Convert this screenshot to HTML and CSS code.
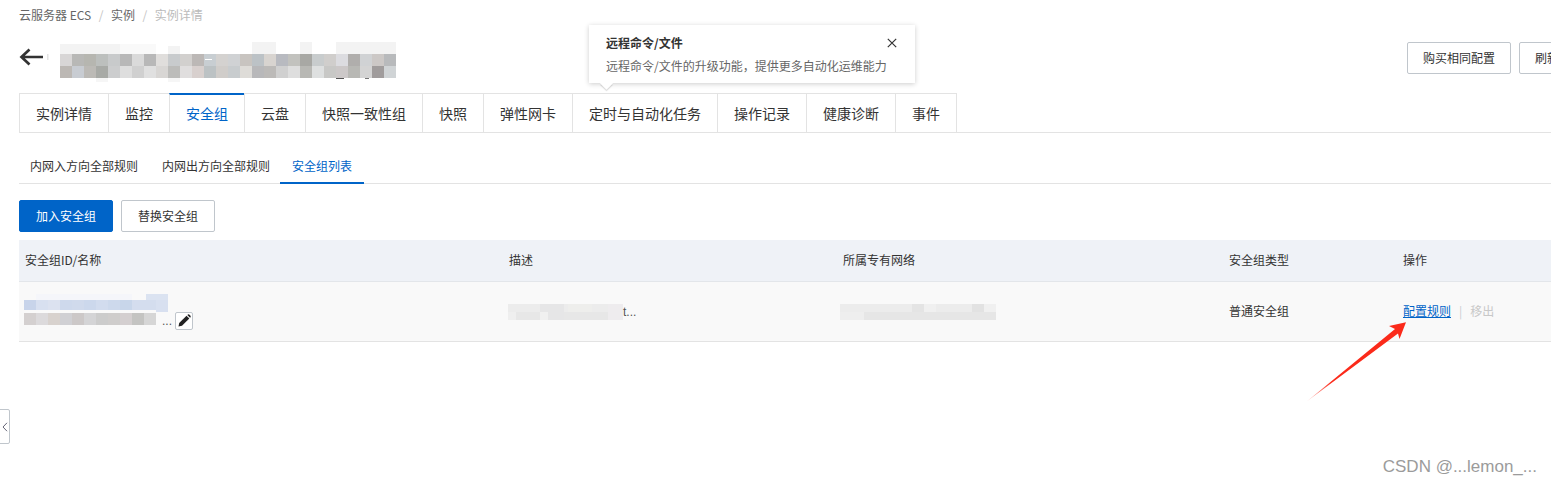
FILE: index.html
```html
<!DOCTYPE html>
<html lang="zh-CN">
<head>
<meta charset="utf-8">
<title>实例详情</title>
<link rel="stylesheet" href="styles.css">
</head>
<body>
<div class="page">
  <nav class="crumbs">
    <a>云服务器 ECS</a><i>/</i><a>实例</a><i>/</i><span>实例详情</span>
  </nav>
  <header class="head">
    <svg class="back" width="30" height="18" viewBox="0 0 30 18"><path d="M24 9H3.500M10.500 1.500 2.500 9l8 7.500" fill="none" stroke="#333" stroke-width="2.700"/><rect x="28" y="6" width="1.500" height="6" fill="#e4e4e4"/></svg>
    <svg class="mosaic-title" width="336" height="41" viewBox="0 0 336 41" shape-rendering="crispEdges">
      <g fill="#f3f3f3"><rect x="0" y="2" width="60" height="10"/><rect x="60" y="2" width="36" height="10" fill="#f9f9f9"/><rect x="108" y="4" width="12" height="8"/><rect x="192" y="0" width="24" height="12"/><rect x="240" y="0" width="12" height="12"/><rect x="276" y="0" width="60" height="12"/><rect x="36" y="36" width="12" height="4" fill="#f6f6f6"/><rect x="108" y="36" width="12" height="4" fill="#f6f6f6"/></g>
      <g>
        <rect x="0" y="12" width="12" height="12" fill="#d8d6d6"/><rect x="12" y="12" width="12" height="12" fill="#b8b8b6"/><rect x="24" y="12" width="12" height="12" fill="#b6b6b0"/><rect x="36" y="12" width="12" height="12" fill="#bcbfbd"/><rect x="48" y="12" width="12" height="12" fill="#c8cacb"/><rect x="60" y="12" width="12" height="12" fill="#b8b8b8"/><rect x="72" y="12" width="12" height="12" fill="#dadada"/><rect x="84" y="12" width="12" height="12" fill="#b8b8b8"/><rect x="96" y="12" width="12" height="12" fill="#e0dedc"/><rect x="108" y="12" width="12" height="12" fill="#c8cbcd"/><rect x="120" y="12" width="12" height="12" fill="#d2d0ce"/><rect x="132" y="12" width="12" height="12" fill="#bcb8b6"/><rect x="144" y="12" width="12" height="12" fill="#c8ced2"/><rect x="156" y="12" width="12" height="12" fill="#d4d2d0"/><rect x="168" y="12" width="12" height="12" fill="#d0d2d4"/><rect x="180" y="12" width="12" height="12" fill="#c8c4c0"/><rect x="192" y="12" width="12" height="12" fill="#bcc2c6"/><rect x="204" y="12" width="12" height="12" fill="#d8d4d0"/><rect x="216" y="12" width="12" height="12" fill="#b8bac0"/><rect x="228" y="12" width="12" height="12" fill="#c2c2be"/><rect x="240" y="12" width="12" height="12" fill="#a8a8a4"/><rect x="252" y="12" width="12" height="12" fill="#c8cccd"/><rect x="264" y="12" width="12" height="12" fill="#d0cecc"/><rect x="276" y="12" width="12" height="12" fill="#dcdce0"/><rect x="288" y="12" width="12" height="12" fill="#b0aeac"/><rect x="300" y="12" width="12" height="12" fill="#d0d2d4"/><rect x="312" y="12" width="12" height="12" fill="#ccc8c6"/><rect x="324" y="12" width="12" height="12" fill="#b8babc"/>
        <rect x="0" y="24" width="12" height="12" fill="#bcb8b4"/><rect x="12" y="24" width="12" height="12" fill="#c8ccd2"/><rect x="24" y="24" width="12" height="12" fill="#bcbab6"/><rect x="36" y="24" width="12" height="12" fill="#a8aaa6"/><rect x="48" y="24" width="12" height="12" fill="#cccdce"/><rect x="60" y="24" width="12" height="12" fill="#dedede"/><rect x="72" y="24" width="12" height="12" fill="#d0d0d0"/><rect x="84" y="24" width="12" height="12" fill="#e0e0e0"/><rect x="96" y="24" width="12" height="12" fill="#d8d6d4"/><rect x="108" y="24" width="12" height="12" fill="#bcbcba"/><rect x="120" y="24" width="12" height="12" fill="#e0dede"/><rect x="132" y="24" width="12" height="12" fill="#d8d0ce"/><rect x="144" y="24" width="12" height="12" fill="#bcc2c4"/><rect x="156" y="24" width="12" height="12" fill="#d0cdca"/><rect x="168" y="24" width="12" height="12" fill="#c8ccce"/><rect x="180" y="24" width="12" height="12" fill="#dedcd8"/><rect x="192" y="24" width="12" height="12" fill="#b8b8ba"/><rect x="204" y="24" width="12" height="12" fill="#bcbab8"/><rect x="216" y="24" width="12" height="12" fill="#d0d0d0"/><rect x="228" y="24" width="12" height="12" fill="#dedede"/><rect x="240" y="24" width="12" height="12" fill="#b8b8b4"/><rect x="252" y="24" width="12" height="12" fill="#dee0e0"/><rect x="264" y="24" width="12" height="12" fill="#c8c8c6"/><rect x="276" y="24" width="12" height="12" fill="#ccc8c8"/><rect x="288" y="24" width="12" height="12" fill="#b8b8b4"/><rect x="300" y="24" width="12" height="12" fill="#d4d4d4"/><rect x="312" y="24" width="12" height="12" fill="#a09c9c"/><rect x="324" y="24" width="12" height="12" fill="#d0d4d6"/>
      </g>
      <rect x="276" y="36" width="8" height="1" fill="#555"/><rect x="305" y="36" width="4" height="1" fill="#777"/><rect x="145" y="17" width="7" height="1" fill="#fff"/>
    </svg>
    <div class="head-actions">
      <button class="btn">购买相同配置</button>
      <button class="btn">刷新</button>
    </div>
  </header>
  <ul class="tabs">
    <li>实例详情</li><li>监控</li><li class="on">安全组</li><li>云盘</li><li>快照一致性组</li><li>快照</li><li>弹性网卡</li><li>定时与自动化任务</li><li>操作记录</li><li>健康诊断</li><li>事件</li>
  </ul>
  <ul class="subtabs">
    <li>内网入方向全部规则</li><li>内网出方向全部规则</li><li class="on">安全组列表</li>
  </ul>
  <div class="toolbar">
    <button class="btn btn-primary">加入安全组</button>
    <button class="btn">替换安全组</button>
  </div>
  <div class="table">
    <div class="tr th">
      <div>安全组ID/名称</div><div>描述</div><div>所属专有网络</div><div>安全组类型</div><div>操作</div>
    </div>
    <div class="tr td">
      <div class="name-cell">
        <svg class="mosaic-name" width="146" height="36" viewBox="0 0 146 36" shape-rendering="crispEdges">
          <rect x="12" y="0" width="96" height="6" fill="#f5f6fa"/><rect x="122" y="0" width="22" height="6" fill="#dbe3f1"/>
          <rect x="0" y="6" width="12" height="10" fill="#c8d4ea"/><rect x="12" y="6" width="12" height="10" fill="#d8e0f0"/><rect x="24" y="6" width="12" height="10" fill="#dce2f0"/><rect x="36" y="6" width="12" height="10" fill="#ced9ec"/><rect x="48" y="6" width="12" height="10" fill="#d0daec"/><rect x="60" y="6" width="12" height="10" fill="#ccd8ec"/><rect x="72" y="6" width="12" height="10" fill="#d2dcee"/><rect x="84" y="6" width="12" height="10" fill="#cdd9ec"/><rect x="96" y="6" width="12" height="10" fill="#c8d6ea"/><rect x="108" y="6" width="12" height="10" fill="#d4ddee"/><rect x="120" y="6" width="12" height="10" fill="#d4ddee"/><rect x="132" y="6" width="12" height="12" fill="#d8e0f0"/>
          <rect x="0" y="19" width="12" height="12" fill="#d4d0d0"/><rect x="12" y="19" width="12" height="12" fill="#dcdadc"/><rect x="24" y="19" width="12" height="12" fill="#d8d2ce"/><rect x="36" y="19" width="12" height="12" fill="#d0d0d4"/><rect x="48" y="19" width="12" height="12" fill="#ccc8c8"/><rect x="60" y="19" width="12" height="12" fill="#d4d4d6"/><rect x="72" y="19" width="12" height="12" fill="#cccccc"/><rect x="84" y="19" width="12" height="12" fill="#cfcdcc"/><rect x="96" y="19" width="12" height="12" fill="#d4cfd0"/><rect x="108" y="19" width="12" height="12" fill="#c4c4c2"/><rect x="120" y="19" width="12" height="12" fill="#d6d6d6"/>
        </svg>
        <span class="dots">...</span>
        <span class="edit"><svg width="13" height="13" viewBox="0 0 13 13"><path d="M0.500 12.500 1.200 9 8.500 1.700 11.300 4.500 4 11.800Z" fill="#222"/><path d="M9.300 0.900 10 0.400Q10.600 0 11.200 0.500L12.500 1.800Q13 2.400 12.600 3L12.100 3.700Z" fill="#222"/></svg></span>
      </div>
      <div class="desc-cell">
        <svg width="115" height="16" viewBox="0 0 115 16" shape-rendering="crispEdges">
          <rect width="115" height="8" fill="#ececec"/><rect x="0" y="8" width="115" height="8" fill="#e7e7e7"/><rect x="32" y="0" width="24" height="16" fill="#e6e6e7"/><rect x="0" y="8" width="8" height="8" fill="#efefef"/><rect x="32" y="8" width="8" height="8" fill="#f0f0f0"/><rect x="60" y="0" width="24" height="8" fill="#eeeeec"/><rect x="100" y="0" width="15" height="16" fill="#eeecee"/>
        </svg><span class="latin">t...</span>
      </div>
      <div class="vpc-cell">
        <svg width="156" height="16" viewBox="0 0 156 16" shape-rendering="crispEdges">
          <rect width="156" height="8" fill="#ececec"/><rect y="8" width="156" height="8" fill="#e6e6e6"/><rect x="0" y="8" width="24" height="8" fill="#eeeeee"/><rect x="72" y="0" width="12" height="8" fill="#e4e4e4"/><rect x="84" y="0" width="12" height="8" fill="#f0f0f0"/><rect x="132" y="0" width="12" height="8" fill="#e2e2e2"/><rect x="144" y="0" width="12" height="8" fill="#f0f0f0"/>
        </svg>
      </div>
      <div>普通安全组</div>
      <div class="ops"><a>配置规则</a><i>|</i><span>移出</span></div>
    </div>
  </div>
</div>

<aside class="pop">
  <button class="pop-close"><svg width="10" height="10" viewBox="0 0 10 10"><path d="M.8.8 9.200 9.200M9.200.8.800 9.200" stroke="#333" stroke-width="1.200" fill="none"/></svg></button>
  <h4>远程命令/文件</h4>
  <p>远程命令/文件的升级功能，提供更多自动化运维能力</p>
</aside>

<div class="collapse"><svg width="6" height="10" viewBox="0 0 6 10"><path d="M5 .8 1 5l4 4.200" fill="none" stroke="#667" stroke-width="1"/></svg></div>

<svg class="arrow" width="102" height="82" viewBox="0 0 102 82">
  <defs><linearGradient id="fade" x1="0" y1="1" x2="1" y2="0"><stop offset="0" stop-color="#fb2a1a" stop-opacity=".2"/><stop offset=".25" stop-color="#fb2a1a"/><stop offset="1" stop-color="#fb2a1a"/></linearGradient></defs>
  <path d="M.7 79.500 89 7 83 4 100 .3 93.500 17 92 11.500Z" fill="url(#fade)"/>
</svg>

<div class="mark">CSDN @...lemon_...</div>
</body>
</html>
```

FILE: styles.css
```css
* { box-sizing: border-box; }
html, body { margin: 0; padding: 0; height: 100%; }
body {
  width: 1551px;
  height: 485px;
  overflow: hidden;
  position: relative;
  background: #fff;
  color: #333;
  font: 12px/18px "Noto Sans CJK SC", "Liberation Sans", sans-serif;
}
ul { list-style: none; margin: 0; padding: 0; }
i { font-style: normal; }
button { font: inherit; cursor: pointer; }

.page { width: 1600px; padding: 6px 0 0 19px; }

.crumbs { display: flex; height: 18px; color: #666; }
.crumbs i { margin: 0 7.500px; color: #c4c4c4; }
.crumbs span { color: #bbb; }

.head { display: flex; align-items: flex-start; margin-top: 12px; height: 57px; }
.back { margin-top: 12px; margin-right: 11px; flex: none; }
.mosaic-title { margin-top: 6px; display: block; flex: none; }
.head-actions { margin-left: auto; margin-top: 6px; display: flex; gap: 8px; padding-right: 25px; }
.head-actions .btn { padding: 0 15px; }

.btn {
  height: 32px;
  padding: 0 16px;
  background: #fff;
  color: #333;
  border: 1px solid #c0c6cc;
  border-radius: 2px;
  white-space: nowrap;
}
.btn-primary { background: #0064c8; border-color: #0064c8; color: #fff; }

.tabs { display: flex; height: 40px; border-bottom: 1px solid #e3e3e3; width: 1532px; font-size: 14px; }
.tabs li {
  height: 39px;
  padding: 0 16px;
  line-height: 38px;
  border: 1px solid #e3e3e3;
  border-bottom: 0;
  margin-right: -1px;
  white-space: nowrap;
}
.tabs li.on { color: #0064c8; border-top: 2px solid #0064c8; line-height: 36px; }

.subtabs { display: flex; height: 51px; padding-top: 18px; border-bottom: 1px solid #e3e3e3; width: 1532px; }
.subtabs li { height: 32px; padding: 0 12px; line-height: 30px; white-space: nowrap; }
.subtabs li:first-child { padding-left: 11px; }
.subtabs li:nth-child(2) { padding-right: 10px; }
.subtabs li.on { color: #0064c8; border-bottom: 2px solid #0064c8; height: 33px; }

.toolbar { display: flex; gap: 8px; margin-top: 16px; }

.table { margin-top: 8px; width: 1532px; }
.tr { display: grid; grid-template-columns: 484px 334px 386px 174px 1fr; align-items: center; padding-left: 6px; padding-bottom: 2px; }
.th { height: 42px; background: #eff2f7; border-bottom: 1px solid #e3e6ea; }
.td { height: 60px; background: #f9f9f9; border-bottom: 1px solid #e3e3e3; }

.name-cell { display: flex; align-items: flex-end; height: 36px; margin: 2px 0 0 -1px; }
.mosaic-name { display: block; flex: none; }
.dots { flex: none; width: 10px; line-height: 12px; margin: 0 -5px 3px -8px; color: #555; font-family: "Liberation Sans", sans-serif; }
.edit {
  width: 18px; height: 18px;
  margin-left: 8px;
  border: 1px solid #c0c6cc;
  border-radius: 2px;
  background: #fff;
  display: flex; align-items: center; justify-content: center;
}
.desc-cell { display: flex; align-items: center; margin: 2px 0 0 -1px; }
.desc-cell svg, .vpc-cell svg { display: block; }
.latin { font-family: "Liberation Sans", sans-serif; color: #555; }
.vpc-cell { margin: 2px 0 0 -3px; }

.ops { display: flex; }
.ops a { color: #0064c8; text-decoration: underline; }
.ops i { margin: 0 8px; color: #c8ccd0; }
.ops span { color: #c8c8c8; }

.pop {
  position: absolute;
  left: 589px; top: 25px;
  width: 326px; height: 58px;
  padding: 9px 17px 0;
  background: #fff;
  box-shadow: 0 1px 5px rgba(0,0,0,.2);
}
.pop::after {
  content: "";
  position: absolute;
  left: 13px; bottom: -5px;
  width: 9px; height: 9px;
  background: #fff;
  transform: rotate(45deg);
  box-shadow: 1px 1px 1px rgba(0,0,0,.14);
}
.pop h4 { margin: 0; font-size: 12px; line-height: 18px; font-weight: 700; color: #333; }
.pop p { margin: 5px 0 0; line-height: 18px; color: #666; white-space: nowrap; }
.pop-close { position: absolute; right: 18px; top: 13px; padding: 0; border: 0; background: none; display: flex; }

.collapse {
  position: absolute;
  left: -1px; top: 409px;
  width: 11px; height: 35px;
  border: 1px solid #c0c6cc;
  border-radius: 0 2px 2px 0;
  background: #fff;
  display: flex; align-items: center; justify-content: center;
}

.arrow { position: absolute; left: 1306px; top: 322px; }

.mark {
  position: absolute;
  right: 14px; top: 458px;
  font: 17px/18px "Liberation Sans", sans-serif;
  color: #9b9b9b;
  white-space: nowrap;
}
```
